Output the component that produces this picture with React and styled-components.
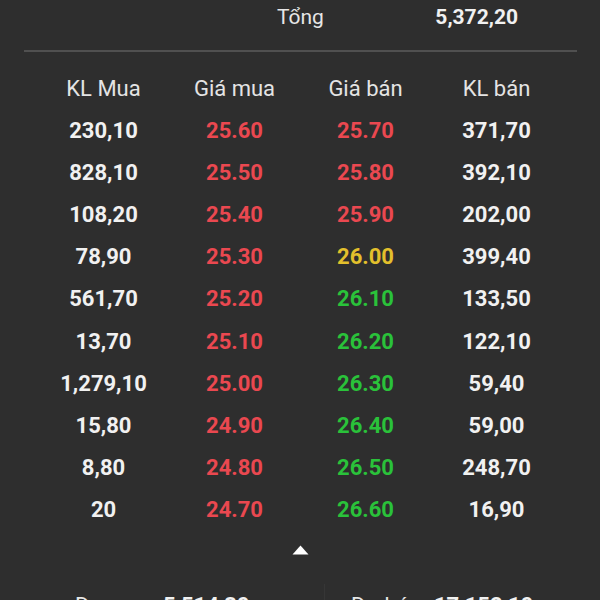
import styled, { createGlobalStyle } from "styled-components"

const GlobalStyle = createGlobalStyle`
html, body {
    margin: 0;
    padding: 0;
    background: #2e2e2e;
}
body {
    font-family: Roboto, "Liberation Sans", sans-serif;
    overflow: hidden;
}
`

const rows = [
    { buyVol: "230,10", buy: "25.60", sell: "25.70", sellVol: "371,70", sellColor: "red" },
    { buyVol: "828,10", buy: "25.50", sell: "25.80", sellVol: "392,10", sellColor: "red" },
    { buyVol: "108,20", buy: "25.40", sell: "25.90", sellVol: "202,00", sellColor: "red" },
    { buyVol: "78,90", buy: "25.30", sell: "26.00", sellVol: "399,40", sellColor: "yellow" },
    { buyVol: "561,70", buy: "25.20", sell: "26.10", sellVol: "133,50", sellColor: "green" },
    { buyVol: "13,70", buy: "25.10", sell: "26.20", sellVol: "122,10", sellColor: "green" },
    { buyVol: "1,279,10", buy: "25.00", sell: "26.30", sellVol: "59,40", sellColor: "green" },
    { buyVol: "15,80", buy: "24.90", sell: "26.40", sellVol: "59,00", sellColor: "green" },
    { buyVol: "8,80", buy: "24.80", sell: "26.50", sellVol: "248,70", sellColor: "green" },
    { buyVol: "20", buy: "24.70", sell: "26.60", sellVol: "16,90", sellColor: "green" },
]

const colors = {
    white: "#f1f1f1",
    red: "#ea4850",
    green: "#2ac23a",
    yellow: "#e3c02c",
}

export default function App() {
    return (
        <StyledScreen>
            <GlobalStyle />

            <StyledTotal>
                <span className="label">Tổng</span>
                <span className="value">5,372,20</span>
            </StyledTotal>

            <StyledDivider />

            <StyledTable>
                <StyledHeader>
                    <span>KL Mua</span>
                    <span>Giá mua</span>
                    <span>Giá bán</span>
                    <span>KL bán</span>
                </StyledHeader>

                {rows.map((r, idx) => (
                    <StyledRow key={idx}>
                        <Cell color="white">{r.buyVol}</Cell>
                        <Cell color="red">{r.buy}</Cell>
                        <Cell color={r.sellColor}>{r.sell}</Cell>
                        <Cell color="white">{r.sellVol}</Cell>
                    </StyledRow>
                ))}
            </StyledTable>

            <StyledToggle>
                <svg width="17" height="10" viewBox="0 0 17 10">
                    <path d="M8.5 0.5 L16.5 9.5 L0.5 9.5 Z" fill="#ffffff" />
                </svg>
            </StyledToggle>

            <StyledSummary>
                <div className="half">
                    <span className="label">Dư mua</span>
                    <span className="value">5,514,30</span>
                </div>
                <div className="sep"></div>
                <div className="half">
                    <span className="label">Dư bán</span>
                    <span className="value">17,152,10</span>
                </div>
            </StyledSummary>
        </StyledScreen>
    )
}

const StyledScreen = styled.main`
width: 600px;
height: 600px;
overflow: hidden;
background: #2e2e2e;
display: flex;
flex-direction: column;

& > *{
    flex-shrink: 0;
}
`

const StyledTotal = styled.div`
height: 34px;
display: flex;
align-items: center;
justify-content: space-between;
padding: 0 82px 0 277px;

.label{
    font-size: 21px;
    font-weight: 400;
    color: #e6e6e6;
}

.value{
    font-size: 21px;
    font-weight: 700;
    color: #f1f1f1;
}
`

const StyledDivider = styled.div`
margin: 16px 23px 0 24px;
height: 2px;
background: #505050;
`

const StyledTable = styled.div`
margin-top: 15px;
padding: 0 38px;
display: flex;
flex-direction: column;
`

const StyledHeader = styled.div`
display: grid;
grid-template-columns: repeat(4, 1fr);
height: 42px;
align-items: center;

span{
    text-align: center;
    font-size: 22px;
    font-weight: 400;
    color: #e4e4e4;
}
`

const StyledRow = styled.div`
display: grid;
grid-template-columns: repeat(4, 1fr);
height: 42.2px;
align-items: center;
`

const Cell = styled.span`
text-align: center;
font-size: 22px;
font-weight: 700;
color: ${(p) => colors[p.color]};
`

const StyledToggle = styled.div`
margin-top: 9px;
display: flex;
justify-content: center;
align-items: center;
height: 20px;

svg{
    margin-left: 1px;
}
`

const StyledSummary = styled.div`
margin-top: 20px;
height: 40px;
display: flex;
align-items: flex-start;

.half{
    flex: 1;
    display: flex;
    align-items: center;
    padding-top: 13px;
}

.half:first-child{
    padding-left: 75px;
}

.half:last-child{
    padding-left: 26px;
}

.sep{
    width: 1px;
    height: 40px;
    margin-top: 4px;
    background: #363636;
}

.label{
    font-size: 22px;
    color: #e6e6e6;
}

.value{
    font-size: 22px;
    font-weight: 700;
    color: #f1f1f1;
}

.half:first-child .value{
    margin-left: 11px;
}

.half:last-child .value{
    margin-left: 13px;
}
`
